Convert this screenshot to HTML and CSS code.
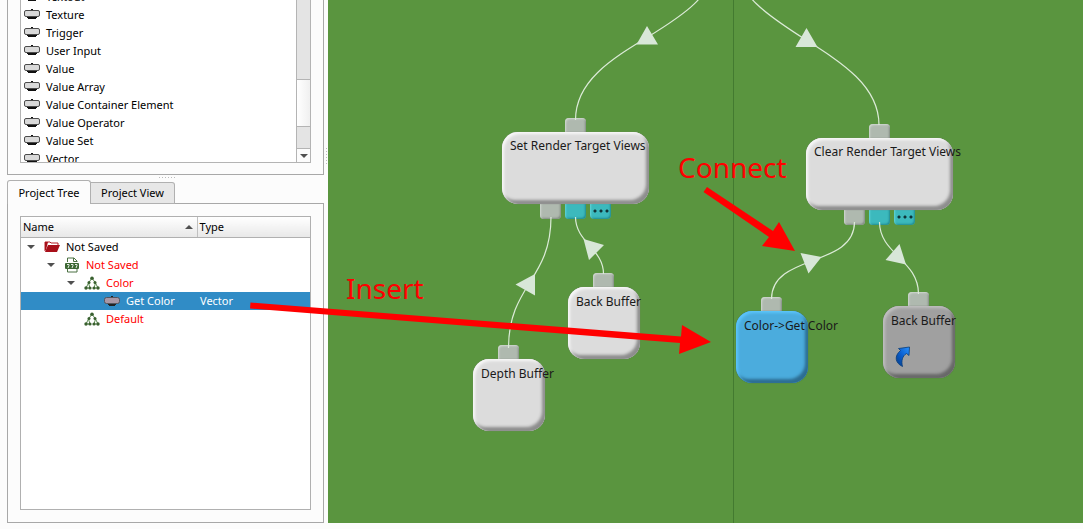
FILE: index.html
```html
<!DOCTYPE html>
<html lang="en">
<head>
<meta charset="utf-8">
<title>Node Editor</title>
<link rel="stylesheet" href="styles.css">
</head>
<body>
<svg class="defs" aria-hidden="true">
  <symbol id="module" viewBox="0 0 16 12">
    <path d="M7 0h2v2H7zM3 8h10v1h-1v1H4V9H3z" fill="#111"/>
    <rect x=".5" y="1.500" width="15" height="6" rx="1.500" fill="#dadada" stroke="#4c4c4c"/>
  </symbol>
  <symbol id="graph" viewBox="0 0 16 14">
    <path d="M8 2 4.500 7 2 12h4L4.500 7M8 2l3.500 5L14 12h-4l1.500-5" fill="none" stroke="#5c8a52" stroke-width="1"/>
    <g fill="#39602f"><circle cx="8" cy="2.300" r="1.800"/><circle cx="5" cy="6.500" r="1.500"/><circle cx="11" cy="6.500" r="1.500"/><circle cx="2" cy="12" r="1.700"/><circle cx="6" cy="12" r="1.600"/><circle cx="10" cy="12" r="1.600"/><circle cx="14" cy="12" r="1.700"/></g>
  </symbol>
</svg>
<div class="app">
  <aside class="sidebar">
    <section class="modules">
      <div class="listbox">
        <ul class="list">
          <li><svg class="icon"><use href="#module"/></svg>Textout</li>
          <li><svg class="icon"><use href="#module"/></svg>Texture</li>
          <li><svg class="icon"><use href="#module"/></svg>Trigger</li>
          <li><svg class="icon"><use href="#module"/></svg>User Input</li>
          <li><svg class="icon"><use href="#module"/></svg>Value</li>
          <li><svg class="icon"><use href="#module"/></svg>Value Array</li>
          <li><svg class="icon"><use href="#module"/></svg>Value Container Element</li>
          <li><svg class="icon"><use href="#module"/></svg>Value Operator</li>
          <li><svg class="icon"><use href="#module"/></svg>Value Set</li>
          <li><svg class="icon"><use href="#module"/></svg>Vector</li>
        </ul>
        <div class="scrollbar">
          <div class="track"></div>
          <div class="thumb"></div>
          <div class="track-end"></div>
          <button class="scroll-down" aria-label="Scroll down"><span class="arrow-down"></span></button>
        </div>
      </div>
    </section>
    <div class="splitter"></div>
    <div class="tabs" role="tablist">
      <button class="tab selected" role="tab" aria-selected="true">Project Tree</button>
      <button class="tab" role="tab" aria-selected="false">Project View</button>
    </div>
    <section class="pane">
      <div class="treebox">
        <table class="tree">
          <thead>
            <tr><th class="name"><div class="head">Name<span class="sort"></span></div></th><th>Type</th></tr>
          </thead>
          <tbody>
            <tr><td><div class="cell"><span class="arrow-down"></span>
              <svg class="icon" viewBox="0 0 16 12"><path d="M1 10V1h5l1 1h7v3" fill="#fff" stroke="#b51c25"/><path d="M1 11 4 4h12l-3 7z" fill="#a80f19"/><path d="M1 1h3L2 9H1z" fill="#a80f19"/></svg>Not Saved</div></td><td></td></tr>
            <tr class="changed"><td><div class="cell level1"><span class="arrow-down"></span>
              <svg class="icon file" viewBox="0 0 16 16"><path d="M3.500 5V1h6.500l3 3v1M3.500 12v3h9.500v-3M9.500 1v3.500H13" fill="#fff" stroke="#4b7142"/><rect x="1" y="6" width="14" height="6" rx="1" fill="#3d6834"/><path d="M3 7.500h2v1L4 11M7 7.500h2v1L8 11M11 7.500h2v1L12 11" fill="none" stroke="#e8f0e6"/></svg>Not Saved</div></td><td></td></tr>
            <tr class="changed"><td><div class="cell level2"><span class="arrow-down"></span><svg class="icon graph"><use href="#graph"/></svg>Color</div></td><td></td></tr>
            <tr class="active"><td><div class="cell level3"><svg class="icon" viewBox="0 0 16 12"><path d="M7 1h2v2H7zM4 9h8v1H11v1H5v-1H4z" fill="#222"/><rect x=".5" y="2.500" width="15" height="6" rx="2" fill="#a997a5" stroke="#54555e"/></svg>Get Color</div></td><td>Vector</td></tr>
            <tr class="changed"><td><div class="cell level2"><span class="arrow-space"></span><svg class="icon graph"><use href="#graph"/></svg>Default</div></td><td></td></tr>
          </tbody>
        </table>
      </div>
    </section>
  </aside>
  <div class="grip"></div>
  <main class="canvas">
    <svg class="layer" aria-hidden="true">
      <g transform="translate(-328 0)">
        <path d="M733.500 0V529" stroke="#437a30"/>
        <g fill="none" stroke="#dcebd8" stroke-width="1.200">
          <path d="M575.500 120C575.500 43 716 33 716-42"/>
          <path d="M879 125C879 48 734 32 734-43"/>
          <path d="M508.500 348C508.500 285 551 280 551 217"/>
          <path d="M603.500 274C603.500 249 575.500 242 575.500 217"/>
          <path d="M771.500 299C771.500 253 854.500 268 854.500 222"/>
          <path d="M879.500 222C879.500 254 918.500 260 918.500 294"/>
        </g>
        <path d="M647 26 658 44.500H636.500ZM806.500 28 817.500 47H795.500ZM515.500 284.500 535 274V295.500ZM583.500 239 604 245 589 260ZM800.500 253 821.500 257 808.500 273.500ZM899.500 244 885.500 260 906 264.500Z" fill="#d8e7d8"/>
      </g>
    </svg>

    <div class="node wide set-views"><span class="port in"></span><span class="label">Set Render Target Views</span><span class="ports"><i class="port"></i><i class="port teal"></i><i class="port teal more"></i></span></div>
    <div class="node wide clear-views"><span class="port in"></span><span class="label">Clear Render Target Views</span><span class="ports"><i class="port"></i><i class="port teal"></i><i class="port teal more"></i></span></div>
    <div class="node depth"><span class="port in"></span><span class="label">Depth Buffer</span></div>
    <div class="node back"><span class="port in"></span><span class="label">Back Buffer</span></div>
    <div class="node blue"><span class="port in"></span><span class="label">Color-&gt;Get Color</span></div>
    <div class="node gray"><span class="port in"></span><span class="label">Back Buffer</span>
      <svg class="link" viewBox="0 0 16 22"><defs><linearGradient id="lg" x1="0" y1="1" x2="1" y2="0"><stop offset="0" stop-color="#063a80"/><stop offset=".5" stop-color="#0a5fd0"/><stop offset="1" stop-color="#2b93ff"/></linearGradient></defs><path d="M3.500 2.500 14.500 1 14 9.500 11.500 7.500C7.500 10 6 14.500 7.500 20.500 0 17-1 10 5.500 4.500Z" fill="url(#lg)" stroke="#093c78" stroke-width=".8"/></svg>
    </div>
    <span class="note insert">Insert</span>
    <span class="note connect">Connect</span>
  </main>
  <svg class="layer arrows" aria-hidden="true">
    <path d="M250.500 302.500 681 336.500 682 325 711 342 679 354 680 343 250 308.500Z"/>
    <path d="M707 187 773 231 779 222 795 251 762 246 769 237 703.500 192Z"/>
  </svg>
</div>
</body>
</html>
```

FILE: styles.css
```css
* { box-sizing: border-box; }
body { margin: 0; background: #fcfcfc; color: #000; font: 12px/18px "Noto Sans", "Open Sans", sans-serif; }
button { font: inherit; color: inherit; padding: 0; margin: 0; }
.defs { position: absolute; width: 0; height: 0; }
.app { position: relative; display: flex; height: 100vh; min-height: 400px; padding-bottom: 6px; overflow: hidden; }

/* Sidebar */
.sidebar { flex: none; width: 324px; padding-left: 7px; display: flex; flex-direction: column; font-size: 11px; }
.modules { border: 1px solid #a8a8a8; border-top: 0; padding: 0 12px 11px; }
.listbox { display: flex; height: 163px; overflow: hidden; background: #fff; border: 1px solid #b4b4b4; border-top: 0; }
.list { flex: 1; list-style: none; margin: -12px 0 0; padding: 0 0 0 3px; }
.list li { display: flex; align-items: center; gap: 6px; height: 18px; }
.icon { flex: none; width: 16px; height: 12px; }
.icon.graph { height: 14px; }
.icon.file { height: 16px; }
.scrollbar { width: 14px; display: flex; flex-direction: column; border-left: 1px solid #b4b4b4; background: #e4e4e4; }
.track { flex: 1; }
.thumb { height: 48px; border: solid #b4b4b4; border-width: 1px 0; background: linear-gradient(90deg, #fff, #f0f0f0); }
.track-end { height: 21px; }
.scroll-down { height: 14px; border: 0; border-top: 1px solid #b4b4b4; background: #fcfcfc; display: flex; align-items: center; justify-content: center; }
.arrow-down { flex: none; border: 4px solid transparent; border-top: 4px solid #505050; border-bottom: 0; }
.arrow-space { flex: none; width: 8px; }
.splitter { height: 5px; width: 17px; margin-left: 152px; background: repeating-linear-gradient(90deg, #bbb 0 1px, transparent 1px 3px) 0 2px / 100% 1px no-repeat; }
.tabs { display: flex; align-items: flex-end; height: 24px; margin-bottom: -1px; z-index: 1; }
.tab { width: 84px; height: 22px; border: 1px solid #b0b0b0; border-left: 0; border-radius: 0 3px 0 0; background: #e7e7e7; }
.tab.selected { height: 24px; border-left: 1px solid #b0b0b0; border-bottom: 0; border-radius: 3px 3px 0 0; background: #fcfcfc; }
.pane { flex: 1; min-height: 0; border: 1px solid #a8a8a8; padding: 12px; }
.treebox { height: 100%; background: #fff; border: 1px solid #b0b0b0; }
.tree { width: 100%; border-collapse: collapse; table-layout: fixed; }
.tree th { height: 20px; padding: 0 2px; text-align: left; font-weight: 400; background: linear-gradient(#fff, #e8e8e8); border-bottom: 1px solid #b0b0b0; }
.tree th.name { width: 176px; border-right: 1px solid #c0c0c0; }
.head { display: flex; justify-content: space-between; align-items: center; }
.sort { border: 4px solid transparent; border-bottom-color: #505050; border-top: 0; margin-right: 2px; }
.tree td { height: 18px; padding: 0 3px; white-space: nowrap; }
.cell { display: flex; align-items: center; padding-left: 3px; }
.cell .icon { margin: 0 6px 0 9px; }
.level1 { padding-left: 23px; }
.level2 { padding-left: 43px; }
.level3 { padding-left: 71px; }
.changed { color: #f00; }
.active { background: #308cc6; color: #fff; }
.grip { flex: none; width: 4px; background: repeating-linear-gradient(#bbb 0 1px, transparent 1px 3px) 2px 148px / 1px 17px no-repeat; }

/* Node canvas */
.canvas { position: relative; z-index: 0; flex: 1; min-width: 0; overflow: hidden; background: #5a953f; }
.layer { position: absolute; inset: 0; width: 100%; height: 100%; }
.arrows { z-index: 1; fill: #f00; pointer-events: none; }
.node { position: absolute; width: 72px; height: 72px; padding: 6px 8px; border-radius: 16px; background: #dcdcdc; box-shadow: inset 2px 2px 3px #f8f8f8, inset -3px -4px 3px #8d8d8d, 0 0 1px #777; }
.wide { width: 147px; padding-top: 5px; }
.label { display: block; white-space: nowrap; color: #1a1a1a; }
.port { position: absolute; z-index: -1; width: 21px; height: 19px; border-radius: 4px; background: #afb9af; box-shadow: inset 1px 1px 2px #d2dad2, inset -1px -1px 2px #7f887f; }
.port.in { left: 25px; top: -14px; }
.wide .port.in { left: 63px; }
.ports { position: absolute; z-index: -1; left: 38px; bottom: -15px; display: flex; gap: 4px; }
.ports .port { position: static; }
.port.teal { background: #3cb9bd; box-shadow: inset 1px 1px 2px #62d5d8, inset -1px -1px 2px #1f888e; }
.port.more {
  background:
    radial-gradient(circle at 5px 11px, #103438 1px, transparent 2px),
    radial-gradient(circle at 11px 11px, #103438 1px, transparent 2px),
    radial-gradient(circle at 17px 11px, #103438 1px, transparent 2px),
    #3cb9bd;
}
.set-views { left: 174px; top: 132px; }
.clear-views { left: 478px; top: 138px; }
.depth { left: 145px; top: 359px; }
.back { left: 240px; top: 287px; }
.blue { left: 408px; top: 311px; background: #4bacdd; box-shadow: inset 2px 2px 3px #5cc5fb, inset -3px -4px 3px #2d6d92, 0 0 1px #357; }
.gray { left: 555px; top: 306px; background: #a0a0a0; box-shadow: inset 2px 2px 3px #c0c0c0, inset -3px -4px 3px #686868, 0 0 1px #555; }
.link { position: absolute; left: 12px; top: 40px; width: 16px; height: 22px; }
.note { position: absolute; color: #f00; font-size: 28px; line-height: 36px; }
.insert { left: 18px; top: 270px; }
.connect { left: 350px; top: 149px; }
```
